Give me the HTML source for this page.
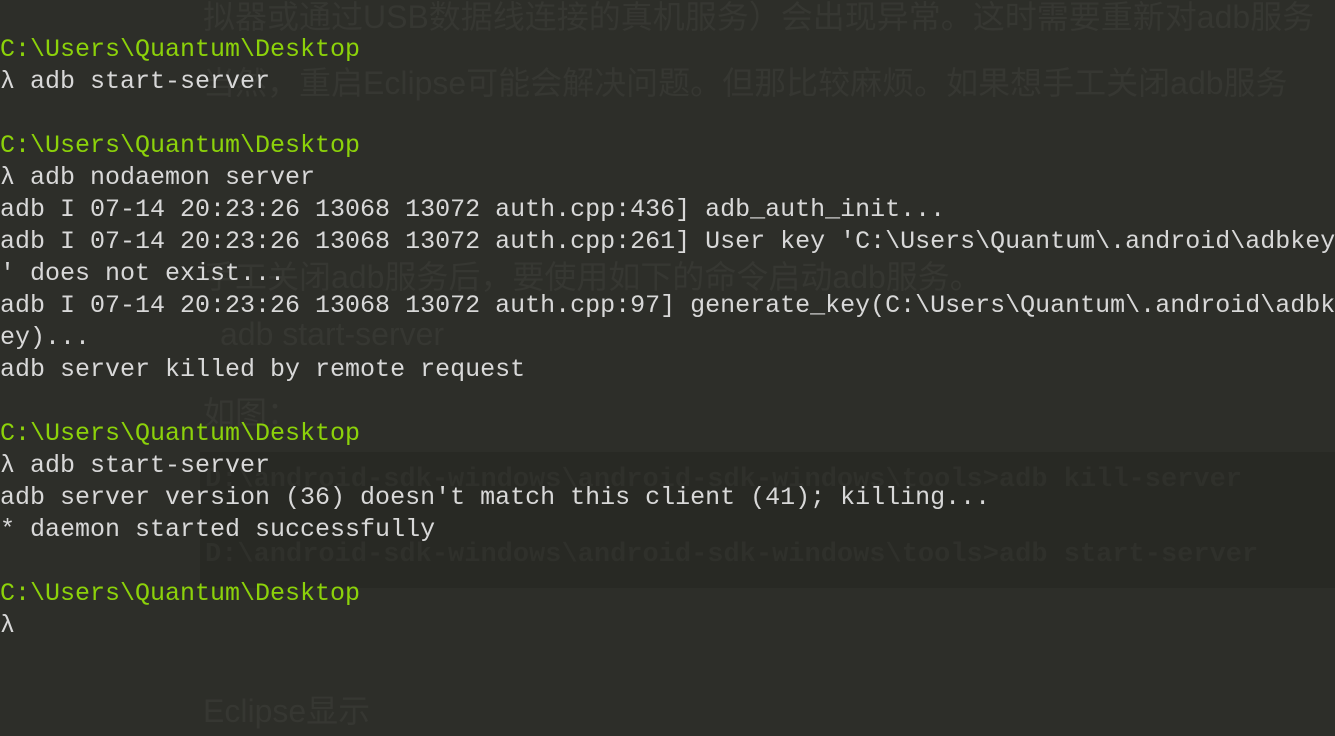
<!DOCTYPE html>
<html><head><meta charset="utf-8"><style>
html,body{margin:0;padding:0;width:1335px;height:736px;overflow:hidden;background:#2d2e29;}
.bg{position:absolute;color:#363732;font-family:"Liberation Sans","Noto Sans CJK SC",sans-serif;font-size:32px;white-space:nowrap;}
.blk{position:absolute;left:200px;top:452px;width:1135px;height:136px;background:#282924;}
.bm{position:absolute;color:#2f302b;font-family:"Liberation Mono","DejaVu Sans Mono",monospace;font-size:27px;font-weight:bold;white-space:nowrap;}
pre{position:absolute;left:0;top:34px;margin:0;font-family:"Liberation Mono","DejaVu Sans Mono",monospace;font-size:25px;line-height:32px;color:#d8d8d8;white-space:pre;}
.g{color:#8cd20a;}
</style></head><body>
<div class="bg" style="left:203px;top:-8px">拟器或通过USB数据线连接的真机服务）会出现异常。这时需要重新对adb服务</div>
<div class="bg" style="left:203px;top:58px">当然，重启Eclipse可能会解决问题。但那比较麻烦。如果想手工关闭adb服务</div>
<div class="bg" style="left:203px;top:252px">手工关闭adb服务后，要使用如下的命令启动adb服务。</div>
<div class="bg" style="left:220px;top:316px">adb start-server</div>
<div class="bg" style="left:203px;top:388px">如图：</div>
<div class="blk"></div>
<div class="bm" style="left:205px;top:465px">D:\android-sdk-windows\android-sdk-windows\tools&gt;adb kill-server</div>
<div class="bm" style="left:205px;top:540px">D:\android-sdk-windows\android-sdk-windows\tools&gt;adb start-server</div>
<div class="bg" style="left:203px;top:686px">Eclipse显示</div>
<pre><span class="g">C:\Users\Quantum\Desktop</span>
λ adb start-server

<span class="g">C:\Users\Quantum\Desktop</span>
λ adb nodaemon server
adb I 07-14 20:23:26 13068 13072 auth.cpp:436] adb_auth_init...
adb I 07-14 20:23:26 13068 13072 auth.cpp:261] User key 'C:\Users\Quantum\.android\adbkey
' does not exist...
adb I 07-14 20:23:26 13068 13072 auth.cpp:97] generate_key(C:\Users\Quantum\.android\adbk
ey)...
adb server killed by remote request

<span class="g">C:\Users\Quantum\Desktop</span>
λ adb start-server
adb server version (36) doesn't match this client (41); killing...
* daemon started successfully

<span class="g">C:\Users\Quantum\Desktop</span>
λ</pre>
</body></html>
